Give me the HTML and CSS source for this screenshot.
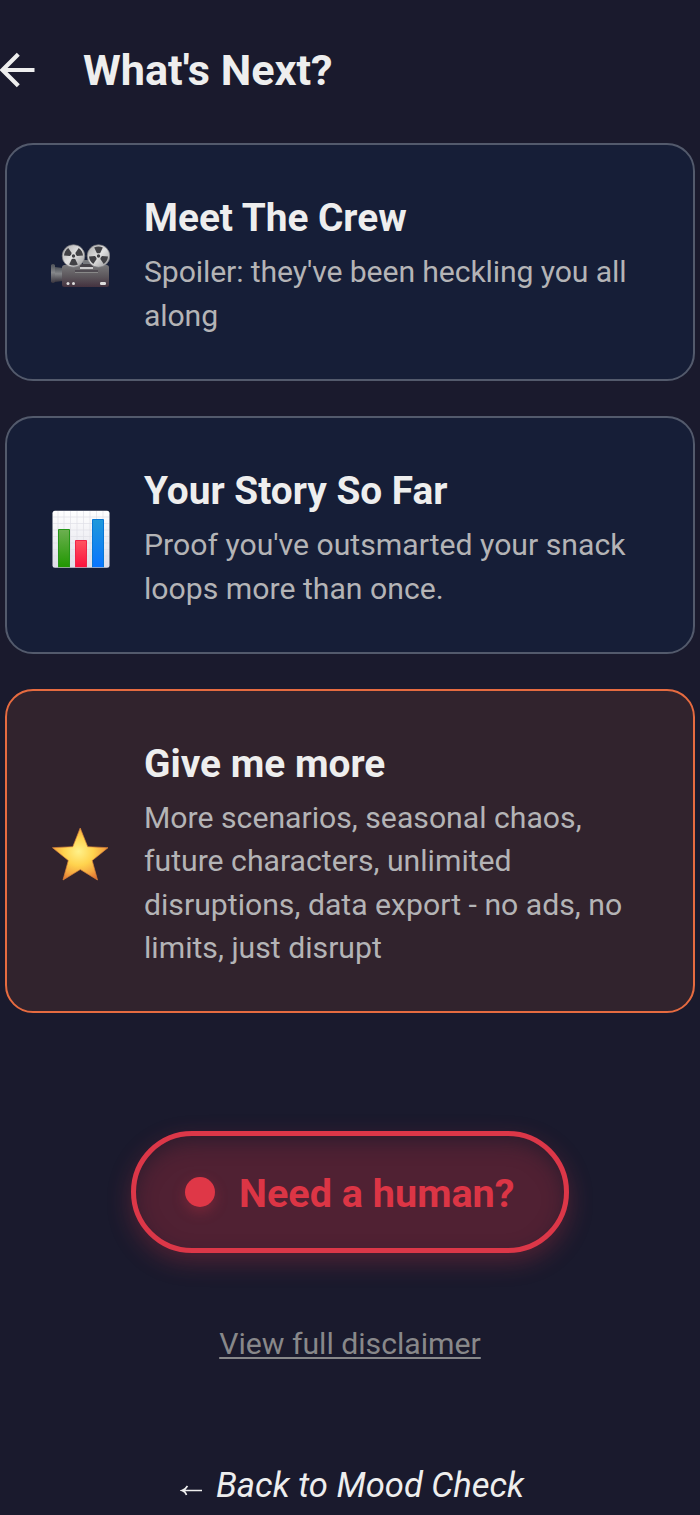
FILE: index.html
```html
<!DOCTYPE html>
<html lang="en">
<head>
<meta charset="utf-8">
<title>What's Next?</title>
<link rel="stylesheet" href="styles.css">
</head>
<body>
<header class="header">
  <svg class="back" viewBox="0 0 36 36" width="36" height="36"><path d="M35.500 18H4M19.300 2.200L3.500 18L19.300 33.800" fill="none" stroke="#eee" stroke-width="4.200"/></svg>
  <h1 class="title">What's Next?</h1>
</header>
<main class="cards">
  <section class="card">
    <svg class="icon camera" viewBox="0 0 60 60" width="60" height="60">
      <defs>
        <linearGradient id="body" x1="0" y1="0" x2="0" y2="1"><stop offset="0" stop-color="#777779"/><stop offset=".5" stop-color="#5d585d"/><stop offset="1" stop-color="#44323f"/></linearGradient>
        <linearGradient id="lens" x1="0" y1="0" x2="0" y2="1"><stop offset="0" stop-color="#4c5057"/><stop offset=".45" stop-color="#85878a"/><stop offset="1" stop-color="#39353e"/></linearGradient>
        <linearGradient id="reel" x1="0" y1="0" x2="1" y2="1"><stop offset="0" stop-color="#aaa"/><stop offset=".5" stop-color="#e2e2e2"/><stop offset="1" stop-color="#929294"/></linearGradient>
        <path id="slot" d="M-4.300-8.500Q0-10.400 4.300-8.500L1.700-3.100Q0-2.400-1.700-3.100z"/>
      </defs>
      <path d="M1 27q2-2 4 0v17q-2 2-4 0z" fill="url(#lens)"/><path d="M5 29l8 1v13l-8 1z" fill="url(#lens)"/>
      <path d="M33 22h9v9h-9z" fill="#77797d"/>
      <rect x="12" y="27" width="47" height="22" rx="2.500" fill="url(#body)"/>
      <path d="M25 32h23v3H25z" fill="#504b52"/><path d="M25 34.500h23" stroke="#888"/>
      <path d="M30 26h13v5H30z" fill="#454248"/><path d="M30 30h13" stroke="#ddd" stroke-width="1.800"/>
      <g transform="translate(23.500 18)"><circle r="11.300" fill="url(#reel)" stroke="#77777b" stroke-width=".7"/><g fill="#414145"><use href="#slot" transform="rotate(60)"/><use href="#slot" transform="rotate(180)"/><use href="#slot" transform="rotate(300)"/><circle r="1.700"/></g></g>
      <g transform="translate(48.500 18)"><circle r="11.300" fill="url(#reel)" stroke="#77777b" stroke-width=".7"/><g fill="#414145"><use href="#slot"/><use href="#slot" transform="rotate(120)"/><use href="#slot" transform="rotate(240)"/><circle r="1.700"/></g></g>
      <circle cx="18" cy="45.500" r="1.500" fill="#ddd"/><circle cx="23.500" cy="45.500" r="1.500" fill="#ddd"/><rect x="50" y="44" width="6" height="3" rx="1.200" fill="#ddd"/>
    </svg>
    <div class="text"><h2 class="name">Meet The Crew</h2><p class="desc crew">Spoiler: they've been heckling you all<br>along</p></div>
  </section>
  <section class="card">
    <svg class="icon" viewBox="0 0 60 60" width="60" height="60">
      <defs>
        <linearGradient id="paper" x1="0" y1="0" x2="0" y2="1"><stop offset="0" stop-color="#fff"/><stop offset="1" stop-color="#dedee8"/></linearGradient>
        <linearGradient id="green" x1="0" y1="0" x2="0" y2="1"><stop offset="0" stop-color="#6daf51"/><stop offset="1" stop-color="#209800"/></linearGradient>
        <linearGradient id="red" x1="0" y1="0" x2="0" y2="1"><stop offset="0" stop-color="#ff5260"/><stop offset="1" stop-color="#fb123d"/></linearGradient>
        <linearGradient id="blue" x1="0" y1="0" x2="0" y2="1"><stop offset="0" stop-color="#2099da"/><stop offset="1" stop-color="#0874ff"/></linearGradient>
      </defs>
      <rect x="2.500" y="1.700" width="57" height="57" rx="2.500" fill="url(#paper)"/>
      <path d="M8 2v56M14 2v56M20.500 2v56M27 2v56M33.500 2v56M40 2v56M46.500 2v56M53 2v56M3 8h56M3 14.500h56M3 21h56M3 27.500h56M3 34h56M3 40.500h56M3 47h56M3 53h56" stroke="#e0e0e6" stroke-width=".7"/>
      <path d="M8.500 58.200V20.500h11v37.700" fill="url(#green)" stroke="#259619"/><path d="M25.500 58.200V31.500h11v26.700" fill="url(#red)" stroke="#ef2448"/><path d="M42.500 58.200V10.500h11v47.700" fill="url(#blue)" stroke="#0777d5"/>
    </svg>
    <div class="text"><h2 class="name">Your Story So Far</h2><p class="desc">Proof you've outsmarted your snack<br>loops more than once.</p></div>
  </section>
  <section class="card more">
    <svg class="icon" viewBox="0 0 60 60" width="60" height="60">
      <defs><radialGradient id="gold" cx=".47" cy=".45" r=".64"><stop offset="0" stop-color="#fff18a"/><stop offset=".42" stop-color="#ffd34e"/><stop offset=".7" stop-color="#f4a740"/><stop offset="1" stop-color="#dc622f"/></radialGradient></defs>
      <path d="M30.200 3L37.700 21.700L58 22.700L42.200 35.500L47.500 55L30.300 44.500L13 55L18.300 35.500L2.500 22.700L22.800 21.700Z" fill="url(#gold)" stroke="#d98239" stroke-width=".7" stroke-linejoin="round"/>
    </svg>
    <div class="text"><h2 class="name">Give me more</h2><p class="desc">More scenarios, seasonal chaos,<br>future characters, unlimited<br>disruptions, data export - no ads, no<br>limits, just disrupt</p></div>
  </section>
</main>
<footer class="footer">
  <a class="human"><span class="dot"></span><span class="label">Need a human?</span></a>
  <a class="disclaimer">View full disclaimer</a>
  <a class="mood"><svg class="left" width="24" height="16" viewBox="0 0 24 16"><path d="M2 8.500H22M7.500 4Q5.500 7.500 2 8.500Q5.500 9.500 6.500 13" fill="none" stroke="#eee" stroke-width="1.600"/></svg><em>Back to Mood Check</em></a>
</footer>
</body>
</html>
```
FILE: styles.css
```css
* { box-sizing: border-box; }
body { margin: 0; height: 1515px; overflow: hidden; background: #1a1a2d; color: #eee; font-family: Roboto, "Liberation Sans", sans-serif; }
h1, h2, p { margin: 0; white-space: nowrap; }
.header { display: flex; align-items: center; height: 143px; padding-bottom: 3px; gap: 48px; }
.back { display: block; margin-left: -1px; margin-top: -1px; }
.title { padding-top: 2px; font-size: 43.2px; line-height: 50px; font-weight: 700; }
.cards { display: flex; flex-direction: column; gap: 35px; padding: 0 5px; }
.card { display: flex; align-items: center; height: 238px; padding: 7px 43px 0; gap: 34px; border: 2px solid #535a6c; border-radius: 28px; background: #161e37; }
.more { height: 324px; border-color: #e66b40; background: #31232d; }
.icon { flex: none; }
.camera { margin-top: 4px; }
.name { font-size: 38.8px; line-height: 48px; font-weight: 700; }
.desc { margin-top: 8px; font-size: 30.2px; line-height: 43.2px; color: #b4b4b6; }
.crew { letter-spacing: -.12px; }
.footer { display: flex; flex-direction: column; align-items: center; padding-top: 118px; }
.human { display: flex; align-items: center; width: 438px; height: 122px; padding-left: 49px; gap: 24px; border: 5px solid #dc3748; border-radius: 61px; background: #502133; color: #dc3545; box-shadow: 0 9px 24px rgba(220, 53, 69, .28), inset 0 8px 20px -2px rgba(20, 25, 42, .6); }
.dot { width: 30px; height: 30px; border-radius: 50%; background: #df3747; box-shadow: 0 5px 14px rgba(220, 53, 69, .3); }
.label { padding-top: 3px; font-size: 39.6px; line-height: 48px; font-weight: 700; white-space: nowrap; }
.disclaimer { margin-top: 69px; font-size: 30.2px; line-height: 43px; color: #88888a; text-decoration: underline; text-decoration-thickness: 2px; text-underline-offset: 3px; }
.mood { display: flex; align-items: center; margin-top: 98px; padding-left: 4px; gap: 12px; font-size: 34.6px; line-height: 44px; white-space: nowrap; }
.left { margin-top: 10px; }
```
